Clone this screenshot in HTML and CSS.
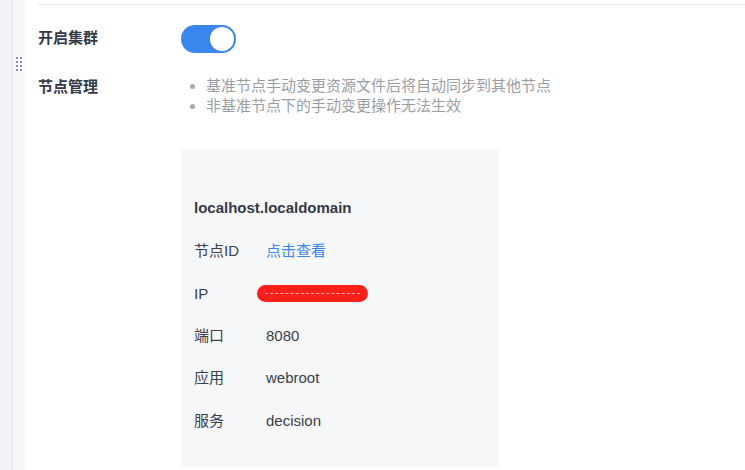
FILE: index.html
```html
<!DOCTYPE html>
<html lang="zh-CN">
<head>
<meta charset="utf-8">
<title>集群配置</title>
<link rel="stylesheet" href="styles.css">
</head>
<body>
<div class="layout">
  <div class="rail"></div>
  <div class="handle-col">
    <div class="handle">
      <span></span><span></span><span></span><span></span>
      <span></span><span></span><span></span><span></span>
    </div>
  </div>
  <div class="main">
    <div class="divider"></div>
    <div class="row row-switch">
      <div class="label label-switch">开启集群</div>
      <div class="switch"><span class="knob"></span></div>
    </div>
    <div class="row row-nodes">
      <div class="label label-nodes">节点管理</div>
      <div class="nodes">
        <ul class="tips">
          <li>基准节点手动变更资源文件后将自动同步到其他节点</li>
          <li>非基准节点下的手动变更操作无法生效</li>
        </ul>
        <div class="card">
          <div class="card-row card-title">localhost.localdomain</div>
          <div class="card-row"><span class="k">节点ID</span><a class="v link">点击查看</a></div>
          <div class="card-row"><span class="k">IP</span><span class="v ip"><span class="redact"></span></span></div>
          <div class="card-row"><span class="k">端口</span><span class="v">8080</span></div>
          <div class="card-row"><span class="k">应用</span><span class="v">webroot</span></div>
          <div class="card-row"><span class="k">服务</span><span class="v">decision</span></div>
        </div>
      </div>
    </div>
  </div>
</div>
</body>
</html>
```
FILE: styles.css
```css
html, body {
  margin: 0;
  padding: 0;
  background: #ffffff;
}
body {
  font-family: "Liberation Sans", Arial, "Noto Sans CJK SC", sans-serif;
  font-size: 15px;
  color: #333333;
}
.layout {
  display: flex;
  height: 470px;
  overflow: hidden;
}
.rail {
  width: 12px;
  background: #f0f2f5;
  border-right: 1px solid #e1e4ea;
  flex: none;
}
.handle-col {
  width: 12px;
  background: #f6f7f9;
  flex: none;
  display: flex;
  justify-content: center;
  padding-top: 57px;
  box-sizing: border-box;
}
.handle {
  display: grid;
  grid-template-columns: 2px 2px;
  grid-auto-rows: 2px;
  column-gap: 2px;
  row-gap: 2px;
  height: 14px;
}
.handle span {
  background: #8c8fa0;
  width: 2px;
  height: 2px;
}
.main {
  flex: 1;
  padding-left: 13px;
}
.divider {
  margin-top: 4px;
  border-top: 1px solid #e8eaee;
}
.row {
  display: flex;
}
.label {
  width: 143px;
  flex: none;
  font-weight: bold;
  color: #343b47;
  font-size: 15px;
}
.row-switch {
  margin-top: 20px;
  height: 28px;
  align-items: center;
}
.label-switch {
  line-height: 20px;
  padding-bottom: 3px;
}
.switch {
  width: 55px;
  height: 28px;
  border-radius: 14px;
  background: #3a86ef;
  box-sizing: border-box;
  padding: 2px;
  display: flex;
  justify-content: flex-end;
}
.knob {
  width: 24px;
  height: 24px;
  border-radius: 50%;
  background: #ffffff;
}
.row-nodes {
  margin-top: 22px;
}
.label-nodes {
  line-height: 20px;
  padding-top: 2px;
}
.nodes {
  display: flex;
  flex-direction: column;
}
.tips {
  list-style: none;
  margin: 0;
  padding: 1px 0 0 25px;
  color: #9a9da3;
  font-size: 15px;
  line-height: 20px;
}
.tips li {
  position: relative;
}
.tips li::before {
  content: "";
  position: absolute;
  left: -16px;
  top: 8px;
  width: 5px;
  height: 5px;
  border-radius: 50%;
  background: #a6a9ae;
}
.card {
  margin-top: 33px;
  width: 318px;
  height: 318px;
  box-sizing: border-box;
  background: #f5f7f9;
  padding: 37px 13px 0;
}
.card-row {
  height: 42.4px;
  display: flex;
  align-items: center;
  line-height: 20px;
  color: #3a3f48;
}
.card-title {
  height: 44px;
  font-weight: bold;
  color: #333a44;
}
.k {
  width: 72px;
  flex: none;
}
.v {
  color: #3a3f48;
}
.link {
  color: #3685f2;
  cursor: pointer;
}
.ip {
  position: relative;
  display: inline-block;
  width: 102px;
  height: 20px;
}
.redact {
  position: absolute;
  left: -9px;
  top: 1px;
  width: 111px;
  height: 17px;
  border-radius: 9px;
  background: #fc1f1a;
}
.redact::after {
  content: "";
  position: absolute;
  left: 8px;
  right: 8px;
  top: 8px;
  border-top: 1px dashed #f2b7b4;
}
```
